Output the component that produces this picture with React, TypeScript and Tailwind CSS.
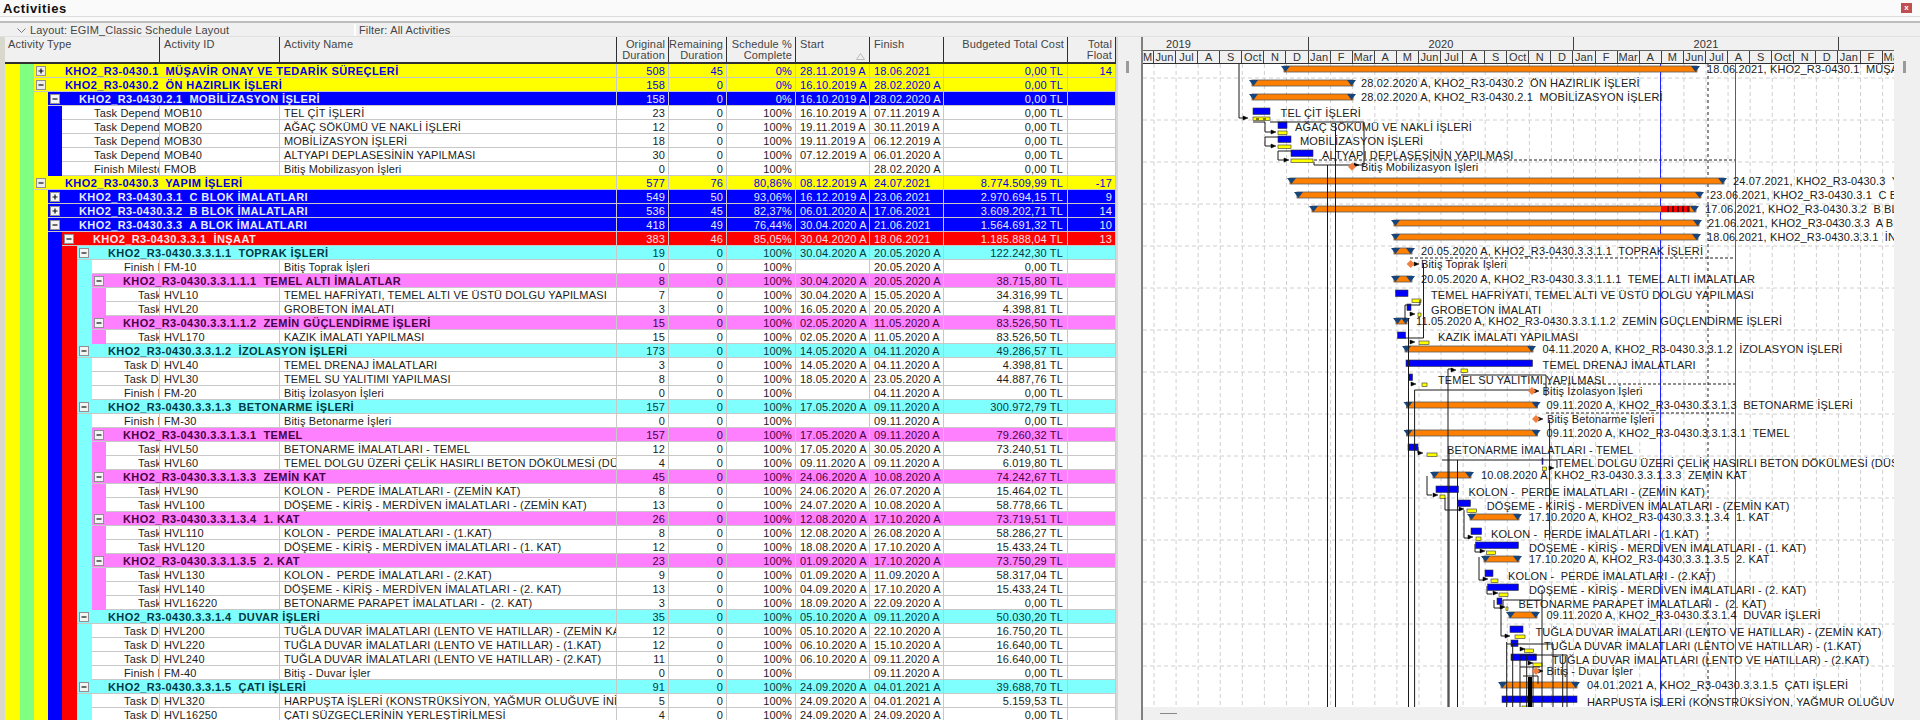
import React from "react";

const font = "font-['Liberation_Sans',Arial,sans-serif]";

type Group = { lv: number; title: string; v: string[] };
type Task = { depth: number; type: string; id: string; name: string; v: string[] };
type Row = Group | Task;

const g = (lv: number, title: string, ...v: string[]): Group => ({ lv, title, v });
const t = (depth: number, type: string, id: string, name: string, ...v: string[]): Task => ({ depth, type, id, name, v });

const TD = "Task Dependent";
const FM = "Finish Milestone";

const rows: Row[] = [
  g(0, "KHO2_R3-0430.1  MÜŞAVİR ONAY VE TEDARİK SÜREÇLERİ", "508", "45", "0%", "28.11.2019 A", "18.06.2021", "0,00 TL", "14"),
  g(0, "KHO2_R3-0430.2  ÖN HAZIRLIK İŞLERİ", "158", "0", "0%", "16.10.2019 A", "28.02.2020 A", "0,00 TL", ""),
  g(1, "KHO2_R3-0430.2.1  MOBİLİZASYON İŞLERİ", "158", "0", "0%", "16.10.2019 A", "28.02.2020 A", "0,00 TL", ""),
  t(4, TD, "MOB10", "TEL ÇİT İŞLERİ", "23", "0", "100%", "16.10.2019 A", "07.11.2019 A", "0,00 TL", ""),
  t(4, TD, "MOB20", "AĞAÇ SÖKÜMÜ VE NAKLİ İŞLERİ", "12", "0", "100%", "19.11.2019 A", "30.11.2019 A", "0,00 TL", ""),
  t(4, TD, "MOB30", "MOBİLİZASYON İŞLERİ", "18", "0", "100%", "19.11.2019 A", "06.12.2019 A", "0,00 TL", ""),
  t(4, TD, "MOB40", "ALTYAPI DEPLASESİNİN YAPILMASI", "30", "0", "100%", "07.12.2019 A", "06.01.2020 A", "0,00 TL", ""),
  t(4, FM, "FMOB", "Bitiş Mobilizasyon İşleri", "0", "0", "100%", "", "28.02.2020 A", "0,00 TL", ""),
  g(0, "KHO2_R3-0430.3  YAPIM İŞLERİ", "577", "76", "80,86%", "08.12.2019 A", "24.07.2021", "8.774.509,99 TL", "-17"),
  g(1, "KHO2_R3-0430.3.1  C BLOK İMALATLARI", "549", "50", "93,06%", "16.12.2019 A", "23.06.2021", "2.970.694,15 TL", "9"),
  g(1, "KHO2_R3-0430.3.2  B BLOK İMALATLARI", "536", "45", "82,37%", "06.01.2020 A", "17.06.2021", "3.609.202,71 TL", "14"),
  g(1, "KHO2_R3-0430.3.3  A BLOK İMALATLARI", "418", "49", "76,44%", "30.04.2020 A", "21.06.2021", "1.564.691,32 TL", "10"),
  g(2, "KHO2_R3-0430.3.3.1  İNŞAAT", "383", "46", "85,05%", "30.04.2020 A", "18.06.2021", "1.185.888,04 TL", "13"),
  g(3, "KHO2_R3-0430.3.3.1.1  TOPRAK İŞLERİ", "19", "0", "100%", "30.04.2020 A", "20.05.2020 A", "122.242,30 TL", ""),
  t(6, FM, "FM-10", "Bitiş Toprak İşleri", "0", "0", "100%", "", "20.05.2020 A", "0,00 TL", ""),
  g(4, "KHO2_R3-0430.3.3.1.1.1  TEMEL ALTI İMALATLAR", "8", "0", "100%", "30.04.2020 A", "20.05.2020 A", "38.715,80 TL", ""),
  t(7, TD, "HVL10", "TEMEL HAFRİYATI, TEMEL ALTI VE ÜSTÜ DOLGU YAPILMASI", "7", "0", "100%", "30.04.2020 A", "15.05.2020 A", "34.316,99 TL", ""),
  t(7, TD, "HVL20", "GROBETON İMALATI", "3", "0", "100%", "16.05.2020 A", "20.05.2020 A", "4.398,81 TL", ""),
  g(4, "KHO2_R3-0430.3.3.1.1.2  ZEMİN GÜÇLENDİRME İŞLERİ", "15", "0", "100%", "02.05.2020 A", "11.05.2020 A", "83.526,50 TL", ""),
  t(7, TD, "HVL170", "KAZIK İMALATI YAPILMASI", "15", "0", "100%", "02.05.2020 A", "11.05.2020 A", "83.526,50 TL", ""),
  g(3, "KHO2_R3-0430.3.3.1.2  İZOLASYON İŞLERİ", "173", "0", "100%", "14.05.2020 A", "04.11.2020 A", "49.286,57 TL", ""),
  t(6, TD, "HVL40", "TEMEL DRENAJ İMALATLARI", "3", "0", "100%", "14.05.2020 A", "04.11.2020 A", "4.398,81 TL", ""),
  t(6, TD, "HVL30", "TEMEL SU YALITIMI YAPILMASI", "8", "0", "100%", "18.05.2020 A", "23.05.2020 A", "44.887,76 TL", ""),
  t(6, FM, "FM-20", "Bitiş İzolasyon İşleri", "0", "0", "100%", "", "04.11.2020 A", "0,00 TL", ""),
  g(3, "KHO2_R3-0430.3.3.1.3  BETONARME İŞLERİ", "157", "0", "100%", "17.05.2020 A", "09.11.2020 A", "300.972,79 TL", ""),
  t(6, FM, "FM-30", "Bitiş Betonarme İşleri", "0", "0", "100%", "", "09.11.2020 A", "0,00 TL", ""),
  g(4, "KHO2_R3-0430.3.3.1.3.1  TEMEL", "157", "0", "100%", "17.05.2020 A", "09.11.2020 A", "79.260,32 TL", ""),
  t(7, TD, "HVL50", "BETONARME İMALATLARI - TEMEL", "12", "0", "100%", "17.05.2020 A", "30.05.2020 A", "73.240,51 TL", ""),
  t(7, TD, "HVL60", "TEMEL DOLGU ÜZERİ ÇELİK HASIRLI BETON DÖKÜLMESİ (DÜŞEME)", "4", "0", "100%", "09.11.2020 A", "09.11.2020 A", "6.019,80 TL", ""),
  g(4, "KHO2_R3-0430.3.3.1.3.3  ZEMİN KAT", "45", "0", "100%", "24.06.2020 A", "10.08.2020 A", "74.242,67 TL", ""),
  t(7, TD, "HVL90", "KOLON -  PERDE İMALATLARI - (ZEMİN KAT)", "8", "0", "100%", "24.06.2020 A", "26.07.2020 A", "15.464,02 TL", ""),
  t(7, TD, "HVL100", "DÖŞEME - KİRİŞ - MERDİVEN İMALATLARI - (ZEMİN KAT)", "13", "0", "100%", "24.07.2020 A", "10.08.2020 A", "58.778,66 TL", ""),
  g(4, "KHO2_R3-0430.3.3.1.3.4  1. KAT", "26", "0", "100%", "12.08.2020 A", "17.10.2020 A", "73.719,51 TL", ""),
  t(7, TD, "HVL110", "KOLON -  PERDE İMALATLARI - (1.KAT)", "8", "0", "100%", "12.08.2020 A", "26.08.2020 A", "58.286,27 TL", ""),
  t(7, TD, "HVL120", "DÖŞEME - KİRİŞ - MERDİVEN İMALATLARI - (1. KAT)", "12", "0", "100%", "18.08.2020 A", "17.10.2020 A", "15.433,24 TL", ""),
  g(4, "KHO2_R3-0430.3.3.1.3.5  2. KAT", "23", "0", "100%", "01.09.2020 A", "17.10.2020 A", "73.750,29 TL", ""),
  t(7, TD, "HVL130", "KOLON -  PERDE İMALATLARI - (2.KAT)", "9", "0", "100%", "01.09.2020 A", "11.09.2020 A", "58.317,04 TL", ""),
  t(7, TD, "HVL140", "DÖŞEME - KİRİŞ - MERDİVEN İMALATLARI - (2. KAT)", "13", "0", "100%", "04.09.2020 A", "17.10.2020 A", "15.433,24 TL", ""),
  t(7, TD, "HVL16220", "BETONARME PARAPET İMALATLARI -  (2. KAT)", "3", "0", "100%", "18.09.2020 A", "22.09.2020 A", "0,00 TL", ""),
  g(3, "KHO2_R3-0430.3.3.1.4  DUVAR İŞLERİ", "35", "0", "100%", "05.10.2020 A", "09.11.2020 A", "50.030,20 TL", ""),
  t(6, TD, "HVL200", "TUĞLA DUVAR İMALATLARI (LENTO VE HATILLAR) - (ZEMİN KAT)", "12", "0", "100%", "05.10.2020 A", "22.10.2020 A", "16.750,20 TL", ""),
  t(6, TD, "HVL220", "TUĞLA DUVAR İMALATLARI (LENTO VE HATILLAR) - (1.KAT)", "12", "0", "100%", "06.10.2020 A", "15.10.2020 A", "16.640,00 TL", ""),
  t(6, TD, "HVL240", "TUĞLA DUVAR İMALATLARI (LENTO VE HATILLAR) - (2.KAT)", "11", "0", "100%", "06.10.2020 A", "09.11.2020 A", "16.640,00 TL", ""),
  t(6, FM, "FM-40", "Bitiş - Duvar İşler", "0", "0", "100%", "", "09.11.2020 A", "0,00 TL", ""),
  g(3, "KHO2_R3-0430.3.3.1.5  ÇATI İŞLERİ", "91", "0", "100%", "24.09.2020 A", "04.01.2021 A", "39.688,70 TL", ""),
  t(6, TD, "HVL320", "HARPUŞTA İŞLERİ (KONSTRÜKSİYON, YAĞMUR OLUĞUVE İNİŞ BORULARI)", "5", "0", "100%", "24.09.2020 A", "04.01.2021 A", "5.159,53 TL", ""),
  t(6, TD, "HVL16250", "ÇATI SÜZGEÇLERİNİN YERLEŞTİRİLMESİ", "4", "0", "100%", "24.09.2020 A", "24.09.2020 A", "0,00 TL", ""),
];

const gutter = [
  "w-[15px] bg-[#ffff00]",
  "w-[14px] bg-[#80ff80]",
  "w-[14px] bg-[#ffff00]",
  "w-[14px] bg-[#0000ff]",
  "w-[15px] bg-[#ff0000]",
  "w-[15px] bg-[#80ffff]",
  "w-[14px] bg-[#ff80ff]",
];

// one entry per outline level: depth in the gutter, colours
const groupStyle = [
  { depth: 2, row: "bg-[#ffff00] text-[#0000e0]", title: "text-[#0000e0]" },
  { depth: 3, row: "bg-[#0000ff] text-[#e8ecff]", title: "text-[#e8ecff]" },
  { depth: 4, row: "bg-[#ff0000] text-[#ffe0e0]", title: "text-[#ffe8e8]" },
  { depth: 5, row: "bg-[#80ffff] text-[#003a44]", title: "text-[#003a44]" },
  { depth: 6, row: "bg-[#ff80ff] text-[#480048]", title: "text-[#480048]" },
];

const numCols = [
  "w-[52px] text-right pr-[3px]",
  "w-[58px] text-right pr-[3px]",
  "w-[69px] text-right pr-[3px]",
  "w-[74px] text-left pl-[4px]",
  "w-[74px] text-left pl-[4px]",
  "w-[124px] text-right pr-[4px]",
  "w-[48px] text-right pr-[3px]",
];

const Gutter = ({ depth }: { depth: number }) => (
  <>
    {gutter.slice(0, depth).map((c, i) => (
      <div key={i} className={`${c} h-full shrink-0`} />
    ))}
  </>
);

const Values = ({ v }: { v: string[] }) => (
  <>
    {v.map((x, i) => (
      <div key={i} className={`${numCols[i]} shrink-0 h-full pt-[1px] border-r border-[#c8c8c8] overflow-hidden whitespace-pre`}>
        {x}
      </div>
    ))}
  </>
);

const Expander = ({ open, dark }: { open: boolean; dark?: boolean }) => (
  <svg width="10" height="10" viewBox="0 0 10 10" className="shrink-0 ml-[2px] mr-[19px]">
    <rect x="0.5" y="0.5" width="9" height="9" fill={dark ? "#f4f4f4" : "#ececec"} stroke="#909090" />
    <path d={open ? "M2.5 5H7.5" : "M2.5 5H7.5M5 2.5V7.5"} stroke="#111" strokeWidth="1.2" />
  </svg>
);

const collapsed = ["KHO2_R3-0430.1 ", "KHO2_R3-0430.3.1 ", "KHO2_R3-0430.3.2 "];

const TableRow = ({ row }: { row: Row }) => {
  if ("title" in row) {
    const s = groupStyle[row.lv];
    const closed = collapsed.some((c) => row.title.startsWith(c));
    return (
      <div className="flex h-[14px]">
        <Gutter depth={s.depth} />
        <div className={`flex flex-1 min-w-0 h-full border-b border-[#c8c8c8] ${s.row}`}>
          <div className="flex items-center flex-1 min-w-0 h-full border-r border-[#c8c8c8] overflow-hidden">
            <Expander open={!closed} dark={row.lv > 0} />
            <span className={`font-bold pt-[1px] whitespace-pre tracking-[0.4px] ${s.title}`}>{row.title}</span>
          </div>
          <Values v={row.v} />
        </div>
      </div>
    );
  }
  return (
    <div className="flex h-[14px]">
      <Gutter depth={row.depth} />
      <div className="flex flex-1 min-w-0 h-full bg-white border-b border-[#c8c8c8] text-[#1c1c1c]">
        <div className="flex-1 min-w-0 h-full pl-[32px] pt-[1px] border-r border-[#c8c8c8] overflow-hidden whitespace-pre">{row.type}</div>
        <div className="w-[120px] shrink-0 h-full pl-[4px] pt-[1px] border-r border-[#c8c8c8] overflow-hidden whitespace-pre">{row.id}</div>
        <div className="w-[337px] shrink-0 h-full pl-[4px] pt-[1px] border-r border-[#c8c8c8] overflow-hidden whitespace-pre">{row.name}</div>
        <Values v={row.v} />
      </div>
    </div>
  );
};

const headers = [
  { w: "w-[155px]", a: "text-left pl-[3px]", l: ["Activity Type"] },
  { w: "w-[120px]", a: "text-left pl-[4px]", l: ["Activity ID"] },
  { w: "w-[337px]", a: "text-left pl-[4px]", l: ["Activity Name"] },
  { w: "w-[52px]", a: "text-right pr-[3px]", l: ["Original", "Duration"] },
  { w: "w-[58px]", a: "text-right pr-[3px]", l: ["Remaining", "Duration"] },
  { w: "w-[69px]", a: "text-right pr-[3px]", l: ["Schedule %", "Complete"] },
  { w: "w-[74px]", a: "text-left pl-[4px]", l: ["Start"] },
  { w: "w-[74px]", a: "text-left pl-[4px]", l: ["Finish"] },
  { w: "w-[124px]", a: "text-right pr-[3px]", l: ["Budgeted Total Cost"] },
  { w: "w-[48px]", a: "text-right pr-[3px]", l: ["Total", "Float"] },
];

const months = ["Jun", "Jul", "A", "S", "Oct", "N", "D", "Jan", "F", "Mar", "A", "M", "Jun", "Jul", "A", "S", "Oct", "N", "D", "Jan", "F", "Mar", "A", "M", "Jun", "Jul", "A", "S", "Oct", "N", "D", "Jan", "F", "Mar"];

const GanttHeader = () => (
  <div className="h-[27px] shrink-0 overflow-hidden border-b border-[#303030] bg-[#f0f0f0] text-[#333]">
    <div className="flex h-[13px] leading-[14px]">
      <div className="w-[166px] shrink-0 pl-[23px] border-r border-[#404040]">2019</div>
      <div className="w-[265px] shrink-0 text-center border-r border-[#404040]">2020</div>
      <div className="w-[265px] shrink-0 text-center border-r border-[#404040]">2021</div>
    </div>
    <div className="flex h-[13px] leading-[13px] border-t border-[#606060]">
      <div className="w-[11px] shrink-0 overflow-hidden border-r border-[#404040]">M</div>
      {months.map((m, i) => (
        <div key={i} className="w-[22.08px] shrink-0 text-center overflow-hidden border-r border-[#404040]">
          {m}
        </div>
      ))}
    </div>
  </div>
);

// [row, x1, x2, labelX, label]
const summaries: [number, number, number, number, string][] = [
  [0, 1281, 1700, 1707, "18.06.2021, KHO2_R3-0430.1  MÜŞAVİR ONAY VE TEDARİK SÜREÇLERİ"],
  [1, 1249, 1356, 1361, "28.02.2020 A, KHO2_R3-0430.2  ÖN HAZIRLIK İŞLERİ"],
  [2, 1249, 1356, 1361, "28.02.2020 A, KHO2_R3-0430.2.1  MOBİLİZASYON İŞLERİ"],
  [8, 1287, 1727, 1733, "24.07.2021, KHO2_R3-0430.3  YAPIM İŞLERİ"],
  [9, 1294, 1704, 1710, "23.06.2021, KHO2_R3-0430.3.1  C BLOK İMALATLARI"],
  [10, 1309, 1699, 1705, "17.06.2021, KHO2_R3-0430.3.2  B BLOK İMALATLARI"],
  [11, 1391, 1702, 1708, "21.06.2021, KHO2_R3-0430.3.3  A BLOK İMALATLARI"],
  [12, 1391, 1701, 1707, "18.06.2021, KHO2_R3-0430.3.3.1  İNŞAAT"],
  [13, 1391, 1415, 1421, "20.05.2020 A, KHO2_R3-0430.3.3.1.1  TOPRAK İŞLERİ"],
  [15, 1391, 1415, 1421, "20.05.2020 A, KHO2_R3-0430.3.3.1.1.1  TEMEL ALTI İMALATLAR"],
  [18, 1393, 1410, 1416, "11.05.2020 A, KHO2_R3-0430.3.3.1.1.2  ZEMİN GÜÇLENDİRME İŞLERİ"],
  [20, 1402, 1536, 1542.6, "04.11.2020 A, KHO2_R3-0430.3.3.1.2  İZOLASYON İŞLERİ"],
  [24, 1403.5, 1540.6, 1546.6, "09.11.2020 A, KHO2_R3-0430.3.3.1.3  BETONARME İŞLERİ"],
  [26, 1403.5, 1540.6, 1546.6, "09.11.2020 A, KHO2_R3-0430.3.3.1.3.1  TEMEL"],
  [29, 1430, 1474, 1481, "10.08.2020 A, KHO2_R3-0430.3.3.1.3.3  ZEMİN KAT"],
  [32, 1467, 1522, 1529, "17.10.2020 A, KHO2_R3-0430.3.3.1.3.4  1. KAT"],
  [35, 1481, 1522, 1529, "17.10.2020 A, KHO2_R3-0430.3.3.1.3.5  2. KAT"],
  [39, 1506, 1540, 1546.6, "09.11.2020 A, KHO2_R3-0430.3.3.1.4  DUVAR İŞLERİ"],
  [44, 1498, 1580, 1587, "04.01.2021 A, KHO2_R3-0430.3.3.1.5  ÇATI İŞLERİ"],
];

// blue x1,x2,y  yellow x1,x2,y  label x,y,text
const tasks: [number, number, number, number, number, number, number, number, string][] = [
  [1253, 1270, 108, 1253, 1270, 117, 1280.6, 113, "TEL ÇİT İŞLERİ"],
  [1278, 1287, 122, 1278, 1287, 131, 1295, 127, "AĞAÇ SÖKÜMÜ VE NAKLİ İŞLERİ"],
  [1278, 1291, 136, 1278, 1291, 145, 1300, 141, "MOBİLİZASYON İŞLERİ"],
  [1291, 1313, 150, 1291, 1313, 159, 1322, 155, "ALTYAPI DEPLASESİNİN YAPILMASI"],
  [1395.5, 1408, 290, 1412, 1421, 299, 1431, 295, "TEMEL HAFRİYATI, TEMEL ALTI VE ÜSTÜ DOLGU YAPILMASI"],
  [1407, 1411, 304, 1418, 1421, 313, 1431, 309.7, "GROBETON İMALATI"],
  [1397.5, 1405.6, 332, 1419, 1429, 341, 1438, 337, "KAZIK İMALATI YAPILMASI"],
  [1406, 1532.5, 360, 1461, 1467.5, 369, 1542.6, 365, "TEMEL DRENAJ İMALATLARI"],
  [1408.6, 1412.6, 374, 1422, 1427, 383, 1438, 379.7, "TEMEL SU YALITIMI YAPILMASI"],
  [1408, 1418, 444, 1427, 1437, 453, 1447, 449.7, "BETONARME İMALATLARI - TEMEL"],
  [1542, 1543, 458, 1542.6, 1546.6, 467, 1557, 463, "TEMEL DOLGU ÜZERİ ÇELİK HASIRLI BETON DÖKÜLMESİ (DÜŞEME)"],
  [1436, 1458.5, 486, 1440, 1445, 495, 1468.5, 491.7, "KOLON -  PERDE İMALATLARI - (ZEMİN KAT)"],
  [1458, 1470.5, 500, 1467, 1476.6, 509, 1486.7, 505.7, "DÖŞEME - KİRİŞ - MERDİVEN İMALATLARI - (ZEMİN KAT)"],
  [1471, 1481.6, 528, 1476, 1481, 537, 1491, 533.7, "KOLON -  PERDE İMALATLARI - (1.KAT)"],
  [1475.6, 1518.4, 542, 1486.7, 1495.7, 551, 1529, 548, "DÖŞEME - KİRİŞ - MERDİVEN İMALATLARI - (1. KAT)"],
  [1485, 1493, 570, 1491, 1498, 579, 1508, 576, "KOLON -  PERDE İMALATLARI - (2.KAT)"],
  [1487.7, 1518.4, 584, 1499, 1508, 593, 1529, 590, "DÖŞEME - KİRİŞ - MERDİVEN İMALATLARI - (2. KAT)"],
  [1497, 1502, 598, 1506, 1508, 607, 1518.4, 604, "BETONARME PARAPET İMALATLARI -  (2. KAT)"],
  [1510, 1523, 626, 1515, 1525, 635, 1535.5, 632, "TUĞLA DUVAR İMALATLARI (LENTO VE HATILLAR) - (ZEMİN KAT)"],
  [1511, 1518, 640, 1524.5, 1533.5, 649, 1544, 645.7, "TUĞLA DUVAR İMALATLARI (LENTO VE HATILLAR) - (1.KAT)"],
  [1511, 1536.5, 654, 1533, 1542, 663, 1552, 660, "TUĞLA DUVAR İMALATLARI (LENTO VE HATILLAR) - (2.KAT)"],
  [1502, 1577, 696, 1522, 1530, 706, 1587, 701.7, "HARPUŞTA İŞLERİ (KONSTRÜKSİYON, YAĞMUR OLUĞUVE İNİŞ BORULARI)"],
];

// diamond x,y  label x, text  dashed line from x,y
const milestones: [number, number, number, string, number, number][] = [
  [1352, 166.7, 1361, "Bitiş Mobilizasyon İşleri", 1314, 160],
  [1410.6, 264, 1421, "Bitiş Toprak İşleri", 1410, 258],
  [1532, 391, 1542.6, "Bitiş İzolasyon İşleri", 1543, 384],
  [1536, 419, 1547, "Bitiş Betonarme İşleri", 1546, 413],
  [1536, 671, 1546.6, "Bitiş - Duvar İşler", 0, 0],
];

const links = [
  "M1239 64V118H1245",
  "M1253 122H1265V132H1272",
  "M1270 122H1364V165H1314V162",
  "M1278 137H1265V146H1272",
  "M1291 151H1278V160H1285",
  "M1327.5 165V707",
  "M1335.5 123V707",
  "M1423.5 263V338H1405",
  "M1405 305H1420V300",
  "M1405 305V320",
  "M1408.5 318V707",
  "M1414.6 390H1531",
  "M1414.6 390V707",
  "M1448 369V707",
  "M1448 369H1453",
  "M1461 375H1546V396",
  "M1449 450V707",
  "M1442 460H1557V468",
  "M1457.5 460V707",
  "M1418 447V453H1421",
  "M1549.6 420V540",
  "M1427 476V495H1432",
  "M1445 498V510H1460",
  "M1464 510V538H1470",
  "M1475 544V552H1480",
  "M1479 557V580H1484",
  "M1487 586V594H1492",
  "M1494 600V608H1503V600H1542",
  "M1542 590V707",
  "M1501 608V636H1507",
  "M1506.7 642V707",
  "M1506.7 644H1553V707",
  "M1512.7 644V707",
  "M1520 655V707",
  "M1520 655H1567V707",
  "M1526.7 655V707",
  "M1533 667V707",
  "M1562.7 654V707",
  "M1520 667H1540",
  "M1523 676H1538V684",
];

const arrows: [number, number][] = [
  [1243, 118], [1271, 132], [1271, 146], [1284, 160], [1414, 264], [1410, 314], [1410, 342], [1411, 384],
  [1451, 370], [1418, 453], [1549, 468], [1433, 495], [1459, 509], [1468, 537], [1480, 551], [1483, 579],
  [1493, 593], [1500, 607], [1505, 636], [1520, 649], [1528, 663], [1354, 165], [1534, 391], [1538, 419], [1538, 671],
];

const gridX = Array.from({ length: 34 }, (_, i) => 1154 + i * 22.08);
const gridY = [78, 120, 162, 204, 246, 288, 330, 372, 414, 456, 498, 540, 582, 624, 666];

const Summary = ({ r, x1, x2 }: { r: number; x1: number; x2: number }) => {
  const y = 64 + 14 * r;
  return (
    <g>
      <rect x={x1 + 3} y={y + 2} width={x2 - x1 - 6} height={6} fill="#ff8000" stroke="#5a5a5a" strokeWidth="0.8" />
      <polygon points={`${x1},${y + 2} ${x1 + 9},${y + 2} ${x1 + 4.5},${y + 8}`} fill="#17447a" />
      <polygon points={`${x2 - 9},${y + 2} ${x2},${y + 2} ${x2 - 4.5},${y + 8}`} fill="#17447a" />
    </g>
  );
};

const Chart = () => (
  <svg viewBox="1143 64 751 643" width="751" height="643" className="block bg-white shrink-0">
    {gridX.map((x) => (
      <line key={x} x1={x} x2={x} y1={64} y2={707} stroke="#d0d0d0" strokeDasharray="4 3" />
    ))}
    {gridY.map((y) => (
      <line key={y} x1={1143} x2={1894} y1={y} y2={y} stroke="#d0d0d0" strokeDasharray="4 3" />
    ))}
    <line x1={1660.5} x2={1660.5} y1={64} y2={707} stroke="#2020ff" />
    <line x1={1708} x2={1708} y1={64} y2={707} stroke="#202020" strokeDasharray="3 3" />
    <line x1={1735.5} x2={1735.5} y1={64} y2={707} stroke="#ee2020" />
    {milestones.map(([, , , label, dx, dy]) =>
      dx ? <path key={label} d={`M${dx} ${dy}H1735`} stroke="#202020" strokeDasharray="3 2" fill="none" /> : null
    )}
    {summaries.map(([r, x1, x2]) => (
      <Summary key={r} r={r} x1={x1} x2={x2} />
    ))}
    <rect x={1661} y={206} width={29} height={6} fill="#ff0000" />
    <path d="M1668 206v6M1673 206v6M1678 206v6M1683 206v6M1688 206v6" stroke="#000" strokeWidth="1.2" />
    {tasks.map(([bx1, bx2, by, yx1, yx2, yy, , , label]) => (
      <g key={label}>
        <rect x={bx1} y={by} width={bx2 - bx1} height={6.5} fill="#0000ff" stroke="#333" strokeWidth="0.6" />
        <rect x={yx1} y={yy} width={yx2 - yx1} height={3.5} fill="#ffff00" stroke="#333" strokeWidth="0.6" />
      </g>
    ))}
    <path d="M1256 119h3M1263 119h3" stroke="#000" />
    {links.map((d) => (
      <path key={d} d={d} stroke="#1a1a1a" fill="none" />
    ))}
    <rect x={1528} y={677} width={4} height={30} fill="#000" />
    {arrows.map(([x, y]) => (
      <polygon key={`${x}-${y}`} points={`${x},${y - 2} ${x + 5},${y} ${x},${y + 2}`} fill="#000" stroke="#000" strokeWidth="0.5" />
    ))}
    {milestones.map(([x, y, , label]) => (
      <polygon key={label} points={`${x - 4},${y} ${x},${y - 4} ${x + 4},${y} ${x},${y + 4}`} fill="#f08040" />
    ))}
    <g className="fill-[#202020]">
      {summaries.map(([r, , , lx, label]) => (
        <text key={r} x={lx} y={64 + 14 * r + 9} xmlSpace="preserve">{label}</text>
      ))}
      {tasks.map(([, , , , , , lx, ly, label]) => (
        <text key={label} x={lx} y={ly + 4} xmlSpace="preserve">{label}</text>
      ))}
      {milestones.map(([, y, lx, label]) => (
        <text key={label} x={lx} y={y + 4} xmlSpace="preserve">{label}</text>
      ))}
    </g>
  </svg>
);

export default function App() {
  return (
    <div className={`${font} w-[1920px] h-[720px] overflow-hidden flex flex-col bg-[#f0f0f0] text-[11px] tracking-[0.15px] leading-[13px]`}>
      <div className="h-[17px] shrink-0 flex items-center justify-between pl-[3px] pr-[8px] bg-[#fafafa] border-b border-[#dcdcdc]">
        <span className="font-bold text-[13px] tracking-[0.6px] text-[#111]">Activities</span>
        <div className="w-[11px] h-[10px] bg-[#c05050] text-white text-[8px] leading-[10px] text-center font-bold">x</div>
      </div>
      <div className="h-[6px] shrink-0 bg-[#fafafa] border-b-2 border-[#bdbdbd]" />
      <div className="h-[14px] shrink-0 flex pl-[5px] pt-[1px] bg-[#f0f0f0] text-[#444] border-b border-[#e0e0e0]">
        <div className="w-[351px] flex items-center pl-[12px] gap-[4px] border-r-2 border-white">
          <svg width="9" height="5" viewBox="0 0 9 5"><path d="M0.5 0.5L4.5 4.5L8.5 0.5" fill="none" stroke="#777" /></svg>
          <span>Layout: EGIM_Classic Schedule Layout</span>
        </div>
        <div className="pl-[3px] flex items-center">Filter: All Activities</div>
      </div>
      <div className="flex flex-1 min-h-0">
        <div className="w-[5px] shrink-0 bg-[#d8d8cc]" />
        <div className="w-[1111px] shrink-0 flex flex-col">
          <div className="flex h-[27px] shrink-0 bg-[#f0f0f0] text-[#444] border-b-2 border-[#303030]">
            {headers.map((h) => (
              <div key={h.l[0]} className={`${h.w} ${h.a} shrink-0 relative pt-[2px] border-r border-[#303030] whitespace-pre`}>
                {h.l.map((x) => (
                  <div key={x} className="h-[11px] leading-[11px]">{x}</div>
                ))}
                {h.l[0] === "Start" && (
                  <svg width="9" height="7" viewBox="0 0 9 7" className="absolute right-[4px] bottom-[2px]">
                    <path d="M4.5 0.5L8.5 6.5H0.5Z" fill="none" stroke="#bbb" />
                  </svg>
                )}
              </div>
            ))}
          </div>
          <div className="flex-1 min-h-0 overflow-hidden">
            {rows.map((r, i) => (
              <TableRow key={i} row={r} />
            ))}
          </div>
        </div>
        <div className="w-[25px] shrink-0 border-l-2 border-[#d8d8d8] pl-[8px] pt-[24px]">
          <div className="w-[3px] h-[12px] bg-[#9a9a9a]" />
        </div>
        <div className="w-[2px] shrink-0 bg-[#808080]" />
        <div className="w-[751px] shrink-0 flex flex-col">
          <GanttHeader />
          <Chart />
          <div className="flex-1 pl-[17px] pt-[6px]">
            <div className="w-[17px] h-px bg-[#888]" />
          </div>
        </div>
        <div className="flex-1 pl-[9px] pt-[24px]">
          <div className="w-[3px] h-[12px] bg-[#9a9a9a]" />
        </div>
      </div>
    </div>
  );
}
